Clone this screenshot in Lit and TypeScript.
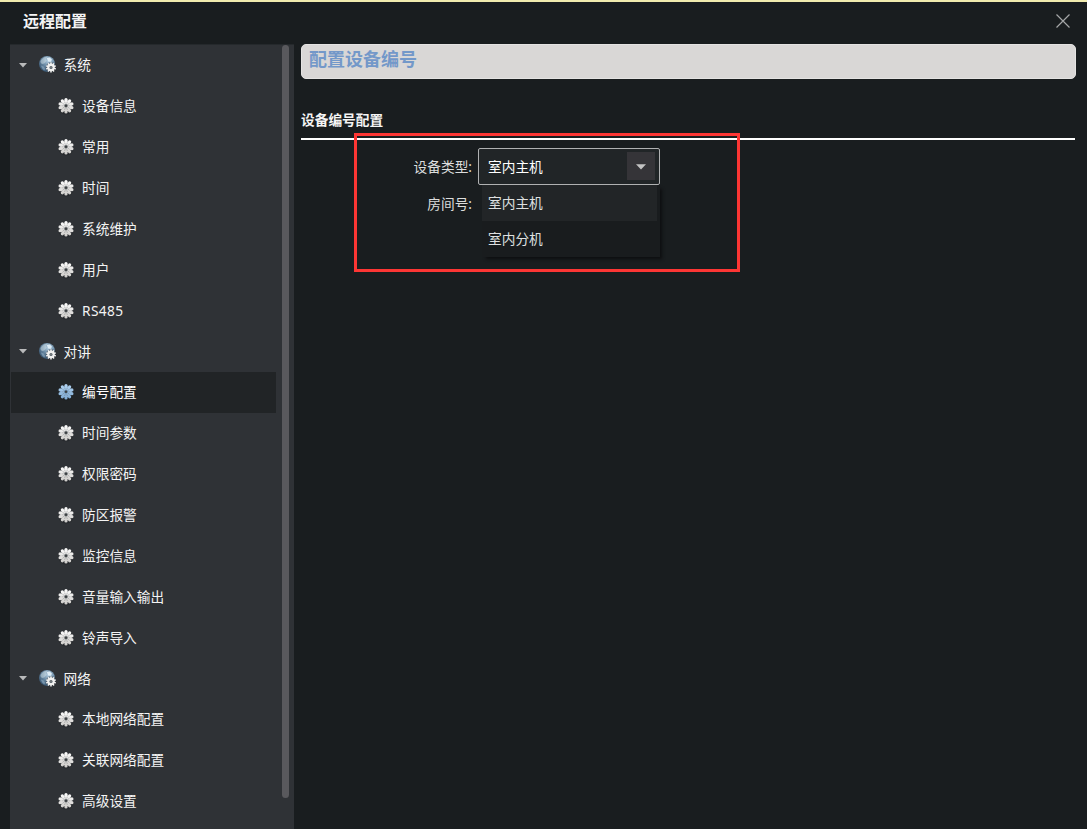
import { LitElement, html, css, svg } from "lit";
import { customElement, property, state } from "lit/decorators.js";
import { classMap } from "lit/directives/class-map.js";

const TEETH = Array.from({ length: 10 }, (_, i) => i * 36);

@customElement("gear-icon")
class GearIcon extends LitElement {
  @property({ type: Boolean }) active = false;

  static styles = css`
    :host { display: block; width: 18px; height: 18px; }
    svg { display: block; }
  `;

  render() {
    const top = this.active ? "#b4d6f4" : "#ffffff";
    const bottom = this.active ? "#7ba7d0" : "#cbc9c6";
    return html`<svg width="18" height="18" viewBox="0 0 18 18">
      <defs>
        <linearGradient id="g" gradientUnits="userSpaceOnUse" x1="0" y1="1" x2="0" y2="17">
          <stop offset="0" stop-color=${top}></stop>
          <stop offset="1" stop-color=${bottom}></stop>
        </linearGradient>
      </defs>
      <ellipse cx="9" cy="10" rx="7.6" ry="7.4" fill="#14171a" opacity=".35"></ellipse>
      <circle cx="9" cy="8.800" r="5.800" fill="url(#g)"></circle>
      ${TEETH.map((a) => {
        const r = (a * Math.PI) / 180;
        const x = 9 + Math.sin(r) * 6.2;
        const y = 8.8 - Math.cos(r) * 6.2;
        return svg`<circle cx=${x} cy=${y} r="1.6" fill="url(#g)"></circle>`;
      })}
      ${TEETH.map(
        (a) => svg`<path d="M9 6.4V4.4" transform="rotate(${a + 18} 9 8.8)" stroke="#55585b" stroke-width=".6" opacity=".5"></path>`
      )}
      <circle cx="9" cy="8.800" r="2.100" fill=${this.active ? "#6d93b5" : "#96999b"}></circle>
      <circle cx="9" cy="8.800" r="1.300" fill="#3c4043"></circle>
    </svg>`;
  }
}

@customElement("globe-icon")
class GlobeIcon extends LitElement {
  static styles = css`
    :host { display: block; width: 20px; height: 20px; }
    svg { display: block; }
  `;

  render() {
    return html`<svg width="20" height="20" viewBox="0 0 20 20">
      <defs>
        <radialGradient id="b" cx=".6" cy=".3" r=".75">
          <stop offset="0" stop-color="#b9d3e6"></stop>
          <stop offset=".45" stop-color="#7090aa"></stop>
          <stop offset="1" stop-color="#34526e"></stop>
        </radialGradient>
      </defs>
      <circle cx="9" cy="8.900" r="8" fill="url(#b)"></circle>
      <path d="M2.300 7.100C3.300 3.400 6.700 1.400 9.700 1.800L8.100 3.900 8.700 5.800 6.300 8.400 3.900 9Z" fill="#dce8ee" opacity=".45"></path>
      <path d="M8.700 3l3-.4 2.200 2-1 2.200-2.600-.4Z" fill="#e8f5fb" opacity=".85"></path>
      <path d="M3.100 10.400l2.600 1 1.400 2.600-.8 1.400C4.500 14.400 3.400 12.600 3.100 10.400Z" fill="#9db9ce" opacity=".5"></path>
      <circle cx="13" cy="12.400" r="5.300" fill="#30363c" opacity=".45"></circle>
      ${Array.from({ length: 10 }, (_, i) => svg`<rect x="12.200" y="7.300" width="1.600" height="2.700" rx=".6" fill="#f4f4f3" transform="rotate(${i * 36} 13 12.400)"></rect>`)}
      <circle cx="13" cy="12.400" r="2.600" fill="none" stroke="#f1f1f0" stroke-width="2.200"></circle>
      <circle cx="13" cy="12.400" r="1.300" fill="#73787b"></circle>
    </svg>`;
  }
}

interface Group {
  name: string;
  items: string[];
}

const GROUPS: Group[] = [
  { name: "系统", items: ["设备信息", "常用", "时间", "系统维护", "用户", "RS485"] },
  { name: "对讲", items: ["编号配置", "时间参数", "权限密码", "防区报警", "监控信息", "音量输入输出", "铃声导入"] },
  { name: "网络", items: ["本地网络配置", "关联网络配置", "高级设置"] },
];

@customElement("app-root")
class AppRoot extends LitElement {
  @state() private selected = "编号配置";
  @state() private deviceType = "室内主机";

  static styles = css`
    :host {
      display: block;
      height: 829px;
      font: 13.7px "Noto Sans", "Noto Sans CJK SC", sans-serif;
      color: #f4f4f4;
    }
    * { box-sizing: border-box; }
    .window {
      display: flex;
      flex-direction: column;
      height: 829px;
      overflow: hidden;
      background: #191d1f;
      border-top: 2px solid #f0ebae;
    }
    .titlebar {
      display: flex;
      justify-content: space-between;
      align-items: center;
      flex: none;
      height: 42px;
      padding: 0 16px 4px 23px;
    }
    .title { font-size: 16px; font-weight: 700; line-height: 24px; }
    .close { display: block; }
    .body { display: flex; flex: 1; min-height: 0; padding-left: 10px; }
    .sidebar {
      display: flex;
      flex: none;
      width: 284px;
      padding: 0 5px 0 1px;
      background: #2f3236;
      border-top: 1px solid #25292c;
      overflow: hidden;
    }
    .tree { flex: none; width: 265px; margin-right: 6px; }
    .row { display: flex; align-items: center; height: 40.88px; white-space: nowrap; }
    .group { padding-left: 8px; }
    .arrow { flex: none; margin-right: 11px; }
    .group globe-icon { flex: none; margin-right: 5.600px; }
    .item { padding-left: 46px; }
    .item gear-icon { flex: none; margin-right: 7px; }
    .selected { background: #212426; color: #fff; }
    .label { line-height: 20px; }
    .latin { letter-spacing: .4px; }
    .thumb { flex: none; width: 7px; height: 753px; border-radius: 4px; background: #59595d; }
    .content { flex: 1; min-width: 0; padding: 0 11px 0 7px; }
    .banner {
      height: 35px;
      padding-left: 7px;
      border-radius: 5px;
      background: #d9d7d6;
      border: 1px solid #e4e3e2;
      color: #7398c9;
      font-size: 18px;
      font-weight: 700;
      line-height: 29px;
    }
    .section {
      height: 61px;
      margin-right: 1px;
      padding-top: 31px;
      border-bottom: 2px solid #fff;
      font-weight: 700;
      line-height: 20px;
    }
    .form {
      position: relative;
      display: grid;
      grid-template-columns: 171px 182px;
      column-gap: 6px;
      padding-top: 8px;
    }
    .field { height: 37px; line-height: 37px; text-align: right; color: #dcdddd; }
    .select {
      display: flex;
      align-items: center;
      justify-content: space-between;
      width: 182px;
      height: 36.500px;
      padding: 0 4px 0 9px;
      border: 1px solid #b0b1b2;
      border-radius: 2px;
      background: #212527;
      color: #fff;
    }
    .drop { display: grid; place-items: center; width: 28px; height: 28px; padding-top: 2px; background: #353438; }
    .menu {
      width: 178px;
      height: 72.500px;
      margin-left: 4px;
      background: #191c1e;
      box-shadow: 3px 3px 3px -1px #0d0f10;
      color: #dfe0e0;
    }
    .combo { position: relative; height: 37px; }
    .popup { position: absolute; left: 0; top: 36.500px; }
    .option { width: 175px; height: 36.200px; padding-left: 6px; line-height: 36px; }
    .hover { background: #222527; }
    .callout {
      position: absolute;
      left: 53px;
      top: -7px;
      width: 386px;
      height: 139px;
      border: 3px solid #fd3634;
      pointer-events: none;
    }
  `;

  private renderItem(name: string) {
    const active = name === this.selected;
    const latin = /^[\x20-\x7e]+$/.test(name);
    return html`<div class=${classMap({ row: true, item: true, selected: active })} @click=${() => (this.selected = name)}>
      <gear-icon ?active=${active}></gear-icon><span class=${classMap({ label: true, latin })}>${name}</span>
    </div>`;
  }

  private renderGroup(group: Group) {
    return html`<div class="row group">
        <svg class="arrow" width="8" height="5" viewBox="0 0 8 5"><path d="M0 0H8L4 4.600Z" fill="#b9babb"></path></svg>
        <globe-icon></globe-icon><span class="label">${group.name}</span>
      </div>
      ${group.items.map((name) => this.renderItem(name))}`;
  }

  render() {
    return html`<div class="window" lang="zh-CN">
      <div class="titlebar">
        <span class="title">远程配置</span>
        <svg class="close" width="16" height="16" viewBox="0 0 16 16">
          <path d="M1.500 1.500L14.500 14.500M14.500 1.500L1.500 14.500" stroke="#a5a7a8" stroke-width="1.200"></path>
        </svg>
      </div>
      <div class="body">
        <div class="sidebar">
          <div class="tree">${GROUPS.map((g) => this.renderGroup(g))}</div>
          <div class="thumb"></div>
        </div>
        <div class="content">
          <div class="banner">配置设备编号</div>
          <div class="section">设备编号配置</div>
          <div class="form">
            <div class="field">设备类型:</div>
            <div class="combo">
              <div class="select">
                <span>${this.deviceType}</span>
                <span class="drop"><svg width="10" height="6" viewBox="0 0 10 6"><path d="M0 .3H10L5 5.500Z" fill="#c3c3c3"></path></svg></span>
              </div>
              <div class="popup">
                <div class="menu">
                  ${["室内主机", "室内分机"].map(
                    (o) => html`<div class=${classMap({ option: true, hover: o === this.deviceType })}>${o}</div>`
                  )}
                </div>
              </div>
            </div>
            <div class="field">房间号:</div>
            <div class="callout"></div>
          </div>
        </div>
      </div>
    </div>`;
  }
}
